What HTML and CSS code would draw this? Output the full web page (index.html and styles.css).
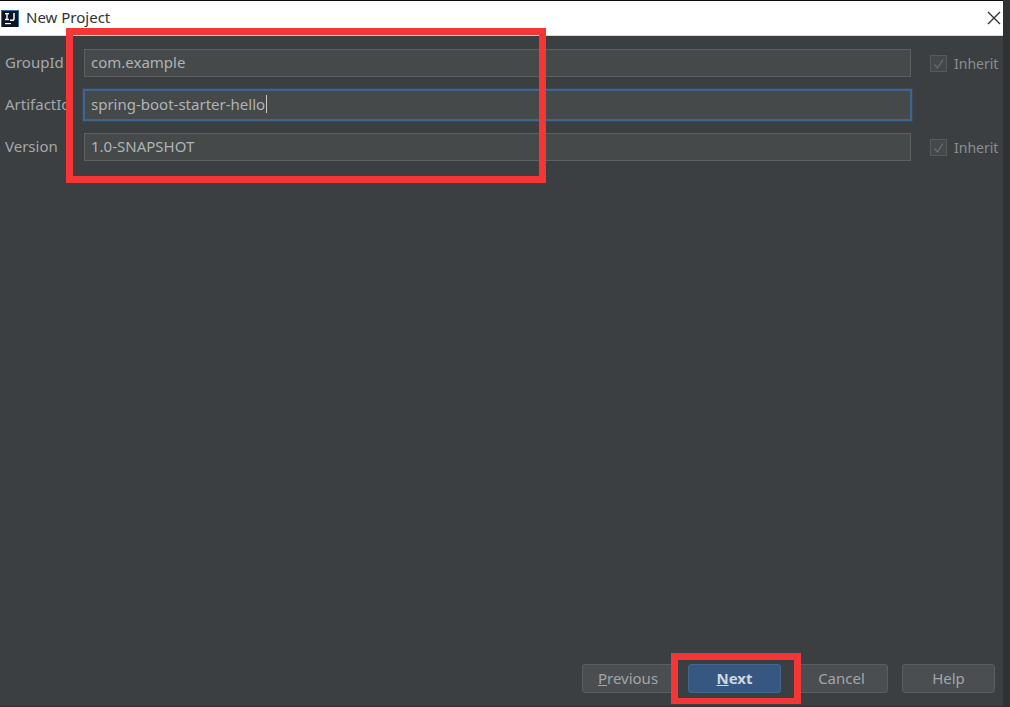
FILE: index.html
```html
<!DOCTYPE html>
<html lang="en">
<head>
<meta charset="utf-8">
<title>New Project</title>
<link rel="stylesheet" href="styles.css">
</head>
<body>
<div class="window">
  <header class="titlebar">
    <div class="title-left">
      <svg class="app-icon" width="18" height="17" viewBox="0 0 18 17" aria-hidden="true">
        <rect width="18" height="17" fill="#0b1526"/>
        <rect x="0" y="0" width="18" height="1" fill="#2f6db0"/>
        <rect x="0" y="0" width="1" height="17" fill="#2f6db0"/>
        <rect x="17" y="0" width="1" height="17" fill="#2f6db0"/>
        <rect x="4" y="3" width="4" height="1.4" fill="#fff"/>
        <rect x="5.3" y="3" width="1.4" height="7" fill="#fff"/>
        <rect x="4" y="8.8" width="4" height="1.4" fill="#fff"/>
        <path d="M13 3v5.5q0 1.8-1.7 1.8H9" fill="none" stroke="#fff" stroke-width="1.5"/>
        <rect x="4" y="13" width="6" height="1.2" fill="#fff"/>
      </svg>
      <span class="title-text">New Project</span>
    </div>
    <svg class="close-icon" width="14" height="14" viewBox="0 0 14 14" aria-hidden="true">
      <path d="M1 1l12 12M13 1L1 13" stroke="#333" stroke-width="1.4" fill="none"/>
    </svg>
  </header>
  <main class="body">
    <div class="form">
      <label class="label">GroupId</label>
      <div class="field">com.example</div>
      <div class="inherit"><span class="check"><svg width="16" height="16" viewBox="0 0 16 16"><path d="M3.5 8.5l3 3.5 5.5-8.5" fill="none" stroke="#6a6c6e" stroke-width="1.3"/></svg></span><span>Inherit</span></div>

      <label class="label">ArtifactId</label>
      <div class="field focused">spring-boot-starter-hello<span class="caret"></span></div>
      <div></div>

      <label class="label">Version</label>
      <div class="field">1.0-SNAPSHOT</div>
      <div class="inherit"><span class="check"><svg width="16" height="16" viewBox="0 0 16 16"><path d="M3.5 8.5l3 3.5 5.5-8.5" fill="none" stroke="#6a6c6e" stroke-width="1.3"/></svg></span><span>Inherit</span></div>
    </div>
    <footer class="footer">
      <button class="btn btn-prev"><u>P</u>revious</button>
      <button class="btn btn-next"><u>N</u>ext</button>
      <button class="btn">Cancel</button>
      <button class="btn">Help</button>
    </footer>
  </main>
</div>
<div class="mark mark-form"></div>
<div class="mark mark-next"></div>
</body>
</html>
```
FILE: styles.css
```css
html, body {
  margin: 0;
  padding: 0;
  width: 1010px;
  height: 707px;
  overflow: hidden;
  background: #2f3133;
  font-family: "Noto Sans", "Open Sans", sans-serif;
}
body { position: relative; }
.window {
  width: 1003px;
  height: 706px;
  display: flex;
  flex-direction: column;
  background: #3c3f41;
}
.titlebar {
  height: 34px;
  border-top: 1px solid #0a0a0a;
  border-bottom: 1px solid #d8d8d8;
  background: #fff;
  display: flex;
  align-items: center;
  justify-content: space-between;
  padding: 0 2px 0 1px;
  flex: none;
}
.title-left { display: flex; align-items: center; gap: 7px; }
.app-icon { display: block; }
.title-text { font-size: 15px; color: #333; line-height: 20px; position: relative; top: -1px; }
.close-icon { display: block; }
.body {
  flex: 1;
  display: flex;
  flex-direction: column;
  justify-content: space-between;
  padding: 13px 0 13px 5px;
}
.form {
  display: grid;
  grid-template-columns: 79px 827px 1fr;
  grid-auto-rows: 28px;
  row-gap: 14px;
  align-items: center;
}
.label { font-size: 15px; line-height: 24px; padding-bottom: 2px; color: #a4a8ab; white-space: nowrap; overflow: hidden; }
.field {
  height: 28px;
  box-sizing: border-box;
  border: 1px solid #5d5f60;
  background: #45494a;
  color: #b0b3b5;
  font-size: 15px;
  padding: 0 0 2px 6px;
  display: flex;
  align-items: center;
}
.focused {
  height: 32px;
  margin: 0 -1px;
  border: 2px solid #3f658c;
  padding: 0 0 2px 6px;
  box-shadow: 0 0 0 1px #3c4a58;
}
.caret { width: 1px; height: 18px; background: #c8c8c8; margin-left: 1px; }
.inherit {
  display: flex;
  align-items: center;
  gap: 7px;
  margin-left: 19px;
  font-size: 14px;
  color: #8b8e90;
  white-space: nowrap;
}
.check {
  width: 15px;
  height: 15px;
  border: 1px solid #57595b;
  background: #45484a;
  display: block;
  flex: none;
}
.check svg { display: block; }
.footer {
  display: flex;
  justify-content: flex-end;
  gap: 14px;
  padding-right: 8px;
}
.btn {
  width: 93px;
  height: 29px;
  box-sizing: border-box;
  border: 1px solid #5b5e60;
  border-radius: 3px;
  background: #4a4e50;
  color: #a2a5a8;
  font: 15px/1 "Noto Sans", "Open Sans", sans-serif;
  padding: 0;
}
.btn-prev { width: 92px; }
.btn-next {
  background: #365880;
  border-color: #42688f;
  color: #cfd6de;
  font-weight: 700;
}
.mark {
  position: absolute;
  box-sizing: border-box;
  border-style: solid;
  border-color: #f53636;
  pointer-events: none;
}
.mark-form {
  left: 66px;
  top: 28px;
  width: 480px;
  height: 155px;
  border-width: 7px;
}
.mark-next {
  left: 671px;
  top: 653px;
  width: 130px;
  height: 51px;
  border-width: 7px 7px 6px;
}
```
